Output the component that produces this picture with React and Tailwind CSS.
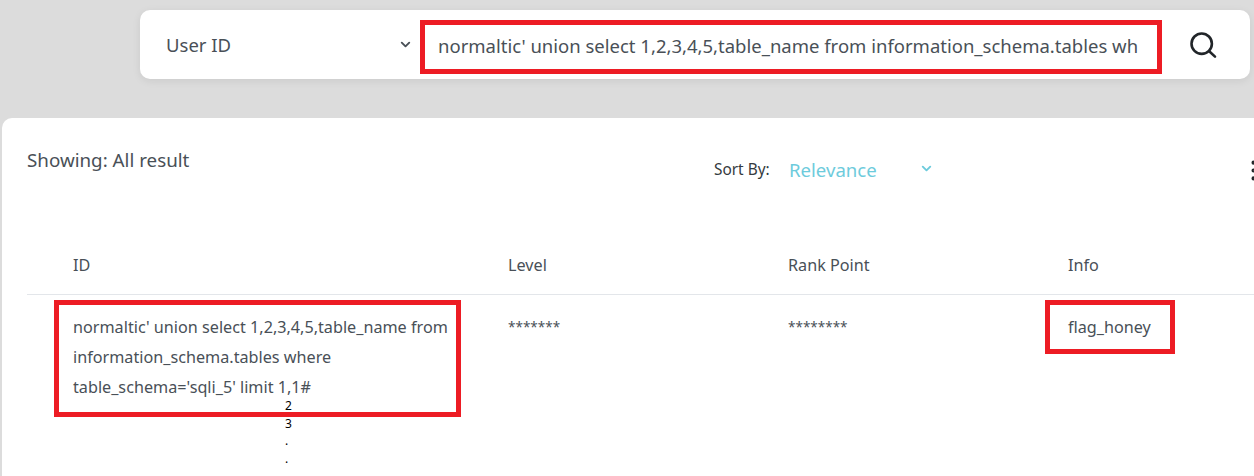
import React from "react";
import { ChevronDown, MoreVertical } from "lucide-react";

const SearchIcon = () => (
  <svg width="28" height="28" viewBox="0 0 28 28" fill="none" stroke="#212529" strokeWidth="2.6" strokeLinecap="round">
    <circle cx="12.7" cy="12.7" r="10.2" />
    <path d="M20.2 20.2 L26 25.6" />
  </svg>
);

const App = () => {
  return (
    <div className="h-[476px] w-[1254px] overflow-hidden bg-[#dcdcdc] pt-[10px] text-[#495057] font-['Noto_Sans','Open_Sans',sans-serif]">
      {/* Search bar */}
      <div className="ml-[140px] mr-[4px] flex h-[69px] items-center rounded-[10px] bg-white shadow-[0_2px_8px_rgba(0,0,0,0.08)]">
        <div className="flex w-[280px] items-center justify-between pl-[26px] pr-[7px] text-[18.5px]">
          <span>User ID</span>
          <ChevronDown size={15} strokeWidth={3} className="text-[#495057]" />
        </div>
        <div className="mt-[5px] h-[54px] w-[742px] border-[5px] border-[#ed1c24] pl-[13px] pr-[19px]">
          <input
            readOnly
            value="normaltic' union select 1,2,3,4,5,table_name from information_schema.tables where table_schema='sqli_5' limit 1,1#"
            className="h-full w-full bg-transparent pb-[4px] text-[18.5px] outline-none"
          />
        </div>
        <div className="flex flex-1 items-center justify-center pl-[2px] pr-[8px]">
          <SearchIcon />
        </div>
      </div>

      {/* Results card */}
      <div className="ml-[2px] mt-[39px] h-[400px] rounded-tl-[10px] bg-white pl-[25px]">
        <div className="flex h-[138px] items-start">
          <div className="mt-[29px] w-[687px] shrink-0 text-[18.8px] leading-[26px]">Showing: All result</div>
          <div className="mt-[38px] flex shrink-0 items-center">
            <span className="w-[75px] text-[15.4px] text-[#343a40]">Sort By:</span>
            <span className="w-[130px] text-[18.6px] text-[#6dcbdc]">Relevance</span>
            <ChevronDown size={15} strokeWidth={3} className="mb-[3px] text-[#6dcbdc]" />
          </div>
          <MoreVertical size={27} strokeWidth={1.6} className="ml-[306px] mt-[39px] shrink-0 text-[#212529]" />
        </div>

        {/* Table */}
        <div className="grid h-[39px] grid-cols-[435px_280px_280px_1fr] border-b border-[#e3e6ea] pl-[46px] text-[16.2px]">
          <span className="-mt-[1px] leading-[20px]">ID</span>
          <span className="-mt-[1px] leading-[20px]">Level</span>
          <span className="-mt-[1px] leading-[20px]">Rank Point</span>
          <span className="-mt-[1px] leading-[20px]">Info</span>
        </div>
        <div className="grid grid-cols-[435px_280px_280px_1fr] pl-[46px] pt-[17px] text-[16.2px] leading-[30px]">
          <div className="relative w-[385px]">
            normaltic' union select 1,2,3,4,5,table_name from information_schema.tables where table_schema='sqli_5' limit 1,1#
            <div className="absolute -left-[19px] -top-[12px] h-[117px] w-[407px] border-[5px] border-[#ed1c24]" />
            <div className="absolute left-[212px] top-[85px] flex flex-col text-[12px] leading-[17.5px] text-black">
              <span>2</span>
              <span>3</span>
              <span>.</span>
              <span>.</span>
            </div>
          </div>
          <span className="text-[13.5px]">*******</span>
          <span className="text-[13.5px]">********</span>
          <div className="relative">
            flag_honey
            <div className="absolute -left-[23px] -top-[12px] h-[54px] w-[130px] border-[5px] border-[#ed1c24]" />
          </div>
        </div>
      </div>
    </div>
  );
};

export default App;
